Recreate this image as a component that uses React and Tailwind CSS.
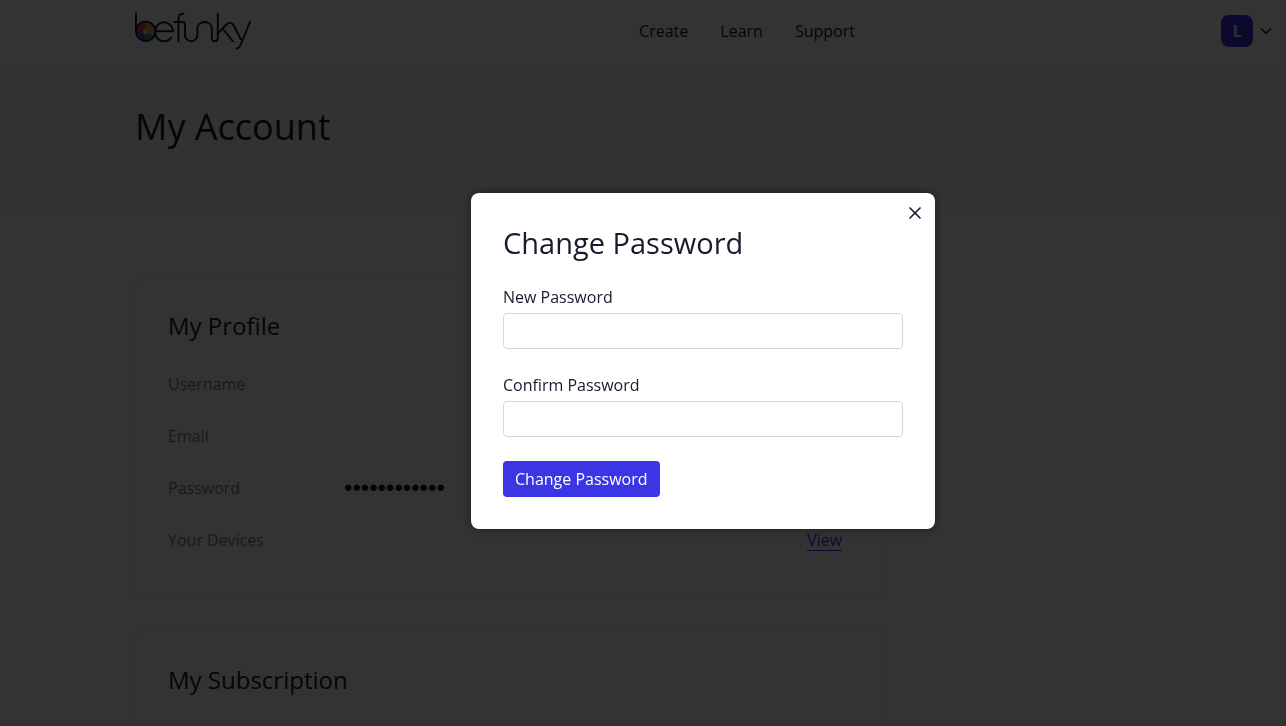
import React from 'react';
import { ChevronDown, X } from 'lucide-react';

const navLinks = ['Create', 'Learn', 'Support'];

const Logo = () => (
  <svg viewBox="0 0 118 38" className="w-[118px] h-[38px]" fill="none" role="img" aria-label="BeFunky">
    {/* color wheel inside the b */}
    <path d="M10.7 19.3 L10.7 10.3 A9 9 0 0 1 18.5 14.8 Z" fill="#e8962e" />
    <path d="M10.7 19.3 L18.5 14.8 A9 9 0 0 1 18.5 23.8 Z" fill="#b9bf2c" />
    <path d="M10.7 19.3 L18.5 23.8 A9 9 0 0 1 10.7 28.3 Z" fill="#3f9f5c" />
    <path d="M10.7 19.3 L10.7 28.3 A9 9 0 0 1 2.9 23.8 Z" fill="#3f62b4" />
    <path d="M10.7 19.3 L2.9 23.8 A9 9 0 0 1 2.9 14.8 Z" fill="#93408f" />
    <path d="M10.7 19.3 L2.9 14.8 A9 9 0 0 1 10.7 10.3 Z" fill="#c9483c" />
    <circle cx="10.7" cy="19.3" r="2.6" fill="#d8d8d8" />
    <g stroke="#1a1a2e" strokeWidth="1.9" strokeLinecap="round" strokeLinejoin="round">
      <path d="M1 1.5 V19.3" />
      <circle cx="10.7" cy="19.3" r="9.7" />
      <path d="M20.5 19.3 H38 A9 9.5 0 1 0 36 25.8" />
      <path d="M43.5 29.5 V6 Q43.5 1.8 48.5 1.8" />
      <path d="M39.5 10 H47.5 Q50 10 50 13 V23 A6.2 6.3 0 0 0 62.4 23 V16.5 A7.2 6.5 0 0 1 76.8 16.5 V26.3 A3 3 0 0 0 82.8 26.3 V1.5" />
      <path d="M83 21.3 L91.5 12.5 Q95.5 8.5 98.5 13 L106 27.5" />
      <path d="M88.3 17.3 L98 29.5" />
      <path d="M115 10 L106 32 Q104.5 36.3 101.5 36.3" />
    </g>
  </svg>
);

const Header = () => (
  <header className="flex items-center h-[67px] border-b border-[#e2e2ec] pl-[135px] pr-[11px] pb-1">
    <a href="#home" className="flex-1"><Logo /></a>
    <nav className="flex gap-8 ml-[84px]">
      {navLinks.map((link) => (
        <a key={link} href="#nav">{link}</a>
      ))}
    </nav>
    <div className="flex-1 flex justify-end">
      <button type="button" aria-label="Account menu" className="flex items-center gap-1">
        <span className="flex items-center justify-center size-8 rounded-lg bg-[#3b35e3] text-[#e4e4f4] font-bold">L</span>
        <ChevronDown size={18} />
      </button>
    </div>
  </header>
);

const ProfileRow = ({ label, children }) => (
  <div className="flex h-[52px] items-center">
    <dt className="w-44 text-[#80808f]">{label}</dt>
    <dd className="flex-1 flex">{children}</dd>
  </div>
);

const Card = ({ title, children }) => (
  <section className="border border-[#ececf2] rounded-lg px-8 pt-[30px] pb-8 mb-8">
    <h2 className="text-2xl leading-9 font-medium">{title}</h2>
    {children}
  </section>
);

const Field = ({ id, label }) => (
  <div className="mb-6">
    <label htmlFor={id} className="block leading-6 mb-1">{label}</label>
    <input id={id} type="password" className="block w-full h-9 px-2 border border-[#d6d6e3] rounded" />
  </div>
);

const ChangePasswordModal = () => (
  <div className="fixed inset-0 flex items-center justify-center bg-black/80 pl-[120px] pb-1">
    <div role="dialog" aria-modal="true" aria-labelledby="modal-title" className="relative w-[464px] bg-white rounded-lg p-8 shadow-[0_0_10px_rgba(0,0,0,0.5)]">
      <button type="button" aria-label="Close" className="absolute top-2 right-2 p-0.5">
        <X size={20} strokeWidth={2} />
      </button>
      <h2 id="modal-title" className="text-[29px] leading-9 font-medium mb-6">Change Password</h2>
      <form>
        <Field id="new-password" label="New Password" />
        <Field id="confirm-password" label="Confirm Password" />
        <button type="submit" className="h-9 px-3 rounded bg-[#3b35e3] text-white">Change Password</button>
      </form>
    </div>
  </div>
);

const App = () => (
  <div className="h-screen overflow-hidden bg-white text-[#1a1a2e] text-base font-['Open_Sans','Noto_Sans',sans-serif]">
    <Header />
    <div className="h-36 bg-[#fafafc] px-[135px] pt-8">
      <h1 className="text-4xl leading-14 font-medium">My Account</h1>
    </div>
    <main className="px-[135px] pt-[66px]">
      <div className="max-w-[752px]">
        <Card title="My Profile">
          <dl className="mt-3.5">
            <ProfileRow label="Username" />
            <ProfileRow label="Email" />
            <ProfileRow label="Password">
              <span className="text-2xl font-['Liberation_Sans',sans-serif]">••••••••••••</span>
            </ProfileRow>
            <ProfileRow label="Your Devices">
              <a href="#devices" className="ml-auto mr-3 text-[#3b35e3] border-b border-[#3b35e3] leading-5">View</a>
            </ProfileRow>
          </dl>
        </Card>
        <Card title="My Subscription" />
      </div>
    </main>
    <ChangePasswordModal />
  </div>
);

export default App;
